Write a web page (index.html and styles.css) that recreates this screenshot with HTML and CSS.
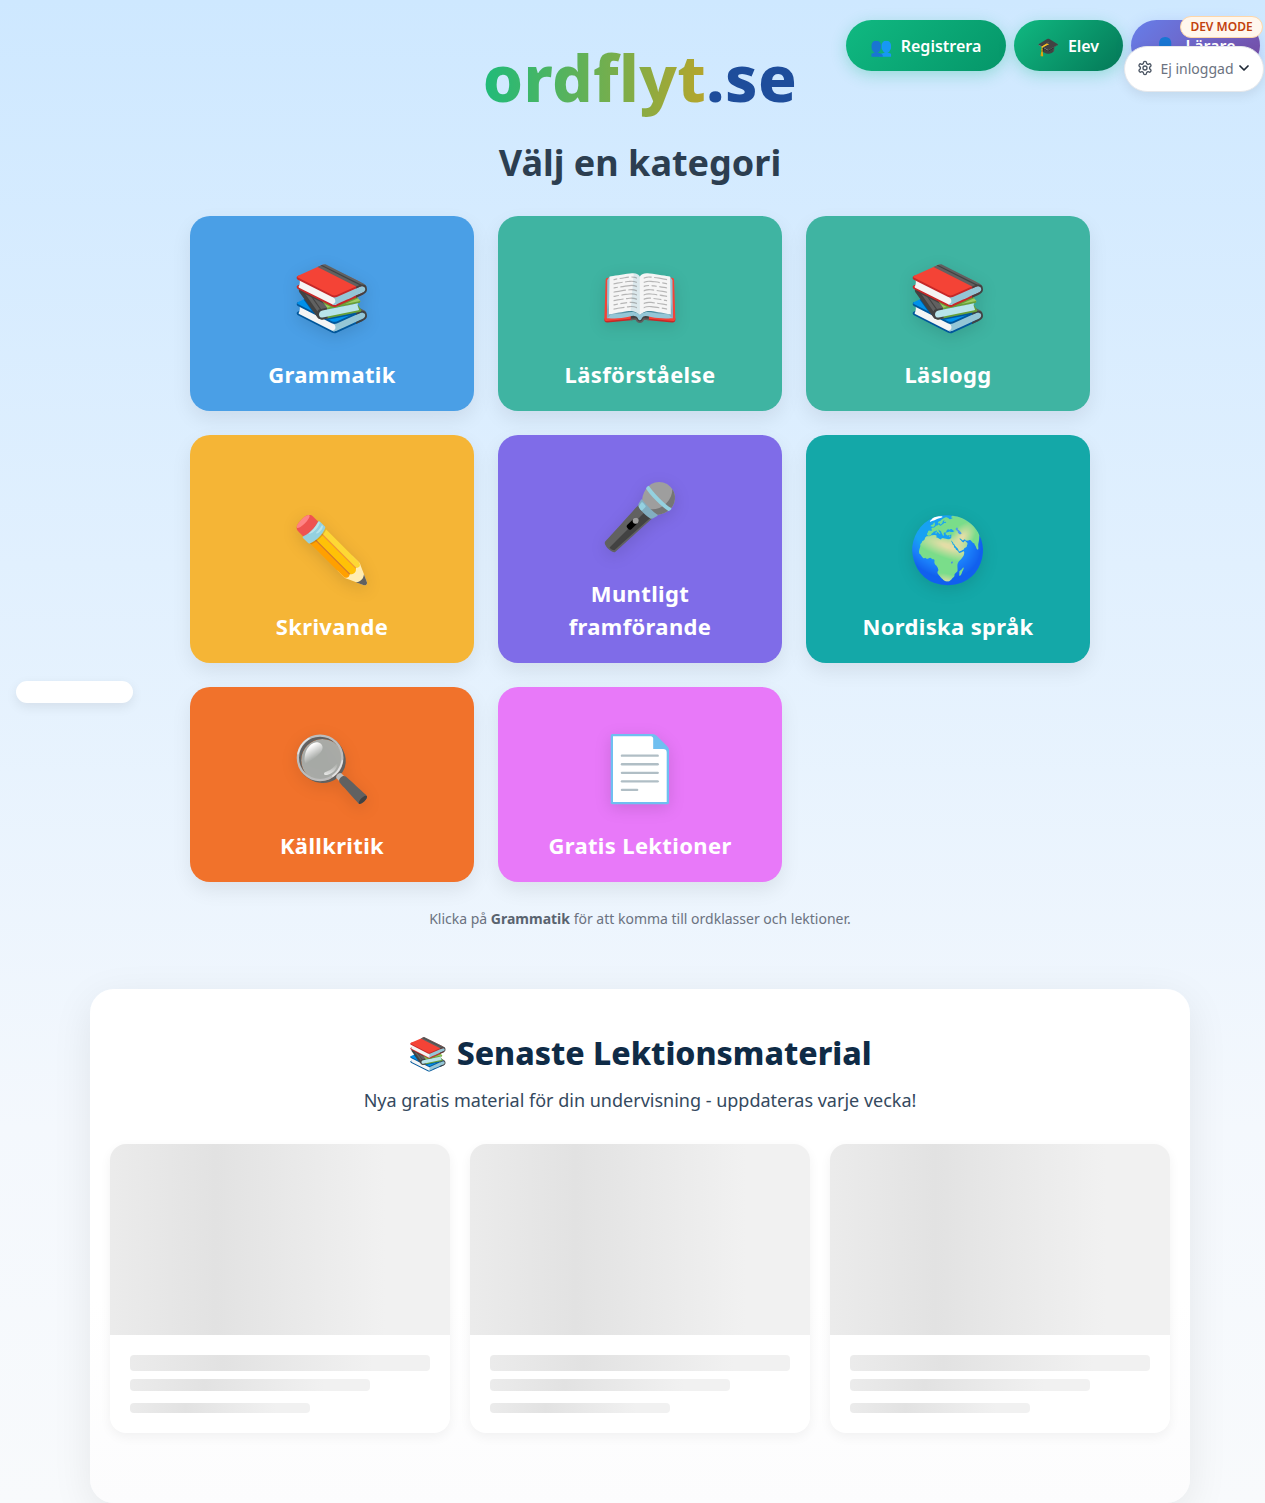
FILE: index.html
```html
<!DOCTYPE html>
<html lang="sv">
<head>
  <meta charset="UTF-8">
  <meta name="viewport" content="width=device-width, initial-scale=1.0">
  <title>ordflyt.se</title>
  <link rel="stylesheet" href="styles.css">
</head>
<body>
  <nav class="top-nav">
    <a class="nav-btn nav-green nav-register"><span class="nav-icon">👥</span> Registrera</a>
    <a class="nav-btn nav-green nav-student"><span class="nav-icon">🎓</span> Elev</a>
    <a class="nav-btn nav-purple"><span class="nav-icon">👤</span> Lärare</a>
  </nav>
  <div class="dev-badge">DEV MODE</div>
  <div class="dev-menu">
    <svg class="gear" viewBox="0 0 24 24" width="16" height="16" fill="none" stroke="currentColor" stroke-width="2" stroke-linecap="round" stroke-linejoin="round">
      <path d="M12.22 2h-.44a2 2 0 0 0-2 2v.18a2 2 0 0 1-1 1.73l-.43.25a2 2 0 0 1-2 0l-.15-.08a2 2 0 0 0-2.73.73l-.22.38a2 2 0 0 0 .73 2.73l.15.1a2 2 0 0 1 1 1.72v.51a2 2 0 0 1-1 1.74l-.15.09a2 2 0 0 0-.73 2.73l.22.38a2 2 0 0 0 2.73.73l.15-.08a2 2 0 0 1 2 0l.43.25a2 2 0 0 1 1 1.73V20a2 2 0 0 0 2 2h.44a2 2 0 0 0 2-2v-.18a2 2 0 0 1 1-1.73l.43-.25a2 2 0 0 1 2 0l.15.08a2 2 0 0 0 2.73-.73l.22-.39a2 2 0 0 0-.73-2.73l-.15-.08a2 2 0 0 1-1-1.74v-.5a2 2 0 0 1 1-1.74l.15-.09a2 2 0 0 0 .73-2.73l-.22-.38a2 2 0 0 0-2.73-.73l-.15.08a2 2 0 0 1-2 0l-.43-.25a2 2 0 0 1-1-1.73V4a2 2 0 0 0-2-2z"/>
      <circle cx="12" cy="12" r="3"/>
    </svg>
    <span>Ej inloggad</span>
    <svg class="chevron" viewBox="0 0 24 24" width="16" height="16" fill="none" stroke="currentColor" stroke-width="2.6" stroke-linecap="round" stroke-linejoin="round">
      <path d="m6 9 6 6 6-6"/>
    </svg>
  </div>
  <div class="float-pill"></div>

  <main class="main-container">
    <h1 class="logo"><span class="logo-word">ordflyt</span><span class="logo-tld">.se</span></h1>
    <h2 class="page-title">Välj en kategori</h2>

    <div class="category-grid">
      <a class="category-card c-blue"><span class="category-icon">📚</span><span class="category-name">Grammatik</span></a>
      <a class="category-card c-teal"><span class="category-icon">📖</span><span class="category-name">Läsförståelse</span></a>
      <a class="category-card c-teal"><span class="category-icon">📚</span><span class="category-name">Läslogg</span></a>
      <a class="category-card c-yellow"><span class="category-icon">✏️</span><span class="category-name">Skrivande</span></a>
      <a class="category-card c-purple"><span class="category-icon">🎤</span><span class="category-name">Muntligt framförande</span></a>
      <a class="category-card c-cyan"><span class="category-icon">🌍</span><span class="category-name">Nordiska språk</span></a>
      <a class="category-card c-orange"><span class="category-icon">🔍</span><span class="category-name">Källkritik</span></a>
      <a class="category-card c-pink"><span class="category-icon">📄</span><span class="category-name">Gratis Lektioner</span></a>
    </div>

    <p class="hint">Klicka på <strong>Grammatik</strong> för att komma till ordklasser och lektioner.</p>

    <section class="latest">
      <h2 class="latest-title">📚 Senaste Lektionsmaterial</h2>
      <p class="latest-sub">Nya gratis material för din undervisning - uppdateras varje vecka!</p>
      <div class="latest-grid">
        <div class="skeleton-card">
          <div class="skeleton skeleton-img"></div>
          <div class="skeleton-body">
            <div class="skeleton line-1"></div>
            <div class="skeleton line-2"></div>
            <div class="skeleton line-3"></div>
          </div>
        </div>
        <div class="skeleton-card">
          <div class="skeleton skeleton-img"></div>
          <div class="skeleton-body">
            <div class="skeleton line-1"></div>
            <div class="skeleton line-2"></div>
            <div class="skeleton line-3"></div>
          </div>
        </div>
        <div class="skeleton-card">
          <div class="skeleton skeleton-img"></div>
          <div class="skeleton-body">
            <div class="skeleton line-1"></div>
            <div class="skeleton line-2"></div>
            <div class="skeleton line-3"></div>
          </div>
        </div>
      </div>
    </section>
  </main>
</body>
</html>
```

FILE: styles.css
```css
* {
  box-sizing: border-box;
}

html, body {
  margin: 0;
  padding: 0;
}

body {
  position: relative;
  height: 1503px;
  overflow: hidden;
  font-family: "Noto Sans", sans-serif;
  background: linear-gradient(180deg, #cee8ff 0%, #f4f8fd 75%, #f8fafc 100%);
  color: #2c3e50;
}

/* top right */
.top-nav {
  position: absolute;
  top: 20px;
  right: 5px;
  display: flex;
  gap: 8px;
}

.nav-btn {
  display: flex;
  align-items: center;
  justify-content: center;
  gap: 8px;
  height: 51px;
  border-radius: 26px;
  color: #fff;
  font-size: 16px;
  font-weight: 600;
}

.nav-register {
  width: 160px;
}

.nav-student {
  width: 109px;
}

.nav-purple {
  width: 129px;
  background: linear-gradient(135deg, #667eea, #764ba2);
  box-shadow: 0 4px 15px rgba(102, 126, 234, 0.3);
}

.nav-green {
  background: linear-gradient(135deg, #10b981, #059669);
  box-shadow: 0 4px 15px rgba(16, 185, 129, 0.3);
}

.nav-student {
  background: linear-gradient(135deg, #10b981, #047857);
}

.nav-icon {
  font-size: 18px;
  margin-left: -1px;
  margin-right: 1px;
}

.dev-badge {
  position: absolute;
  top: 16px;
  right: 2px;
  width: 83px;
  height: 22px;
  line-height: 20px;
  text-align: center;
  font-size: 12px;
  font-weight: 600;
  color: #c2410c;
  background: #fff7ed;
  border: 1px solid #fed7aa;
  border-radius: 11px;
  z-index: 3;
}

.dev-menu {
  position: absolute;
  top: 46px;
  right: 1px;
  width: 140px;
  height: 46px;
  padding-bottom: 2px;
  display: flex;
  align-items: center;
  justify-content: center;
  gap: 3px;
  font-size: 14px;
  color: #6b7280;
  background: #fff;
  border: 1px solid #e5e7eb;
  border-radius: 23px;
  box-shadow: 0 4px 12px rgba(0, 0, 0, 0.08);
  z-index: 2;
}

.gear {
  color: #4b5563;
  margin-left: 1px;
  margin-right: 4px;
}

.chevron {
  color: #1f2937;
  margin-left: -1px;
}

.float-pill {
  position: absolute;
  top: 681px;
  left: 16px;
  width: 117px;
  height: 22px;
  background: #fff;
  border-radius: 11px;
  box-shadow: 0 4px 12px rgba(0, 0, 0, 0.08);
}

/* main */
.main-container {
  width: 1280px;
  display: flex;
  flex-direction: column;
  align-items: center;
}

.logo {
  margin: 34px 0 0;
  font-size: 64px;
  line-height: 88px;
  font-weight: 800;
  letter-spacing: 0.4px;
}

.logo-word {
  background: linear-gradient(90deg, #1fbb7a, #b5a52c);
  -webkit-background-clip: text;
  background-clip: text;
  color: transparent;
}

.logo-tld {
  color: #1e4d9b;
}

.page-title {
  margin: 16px 0 0;
  font-size: 36px;
  line-height: 50px;
  font-weight: 700;
  color: #2c3e50;
}

.category-grid {
  display: grid;
  grid-template-columns: repeat(3, 284px);
  gap: 24px;
  margin-top: 28px;
}

.category-card {
  display: flex;
  flex-direction: column;
  align-items: center;
  justify-content: flex-end;
  padding: 44px 40px 20px;
  border-radius: 20px;
  color: #fff;
  text-align: center;
  box-shadow: 0 8px 20px rgba(0, 0, 0, 0.08);
}

.category-icon {
  font-size: 64px;
  line-height: 72px;
  margin-bottom: 26px;
  filter: drop-shadow(0 4px 8px rgba(0, 0, 0, 0.12));
}

.category-name {
  font-size: 22px;
  line-height: 33px;
  font-weight: 700;
  letter-spacing: 0.35px;
}

.c-blue { background: #4a9fe6; }
.c-teal { background: #3fb4a2; }
.c-yellow { background: #f5b536; }
.c-purple { background: #7f6ce8; }
.c-cyan { background: #14a8a8; }
.c-orange { background: #f1722b; }
.c-pink { background: #e879f9; }

.hint {
  margin: 27px 0 0;
  font-size: 14px;
  line-height: 20px;
  color: #6b7280;
}

.hint strong {
  color: #59636f;
}

/* latest materials */
.latest {
  width: 1100px;
  height: 514px;
  margin-top: 60px;
  padding: 40px 20px;
  background: linear-gradient(180deg, #fff 60%, #fcfcfd 100%);
  border-radius: 24px;
  box-shadow: 0 10px 40px rgba(0, 0, 0, 0.08);
  text-align: center;
}

.latest-title {
  margin: 0;
  font-size: 32px;
  line-height: 48px;
  font-weight: 800;
  color: #0f2b46;
}

.latest-sub {
  margin: 10px 0 0;
  font-size: 18px;
  line-height: 27px;
  color: #34495e;
}

.latest-grid {
  display: grid;
  grid-template-columns: repeat(3, 1fr);
  gap: 20px;
  margin-top: 30px;
}

.skeleton-card {
  height: 289px;
  background: #fff;
  border-radius: 16px;
  overflow: hidden;
  box-shadow: 0 4px 12px rgba(0, 0, 0, 0.05);
}

.skeleton {
  background: linear-gradient(90deg, #f1f1f1 25%, #e2e2e2 50%, #f1f1f1 75%);
  background-size: 200% 100%;
  background-position: 69% 0;
}

.skeleton-img {
  height: 191px;
}

.skeleton-body {
  padding: 20px;
}

.line-1, .line-2, .line-3 {
  border-radius: 4px;
}

.line-1 {
  height: 16px;
}

.line-2 {
  width: 240px;
  height: 12px;
  margin-top: 8px;
}

.line-3 {
  width: 180px;
  height: 10px;
  margin-top: 12px;
}
```
